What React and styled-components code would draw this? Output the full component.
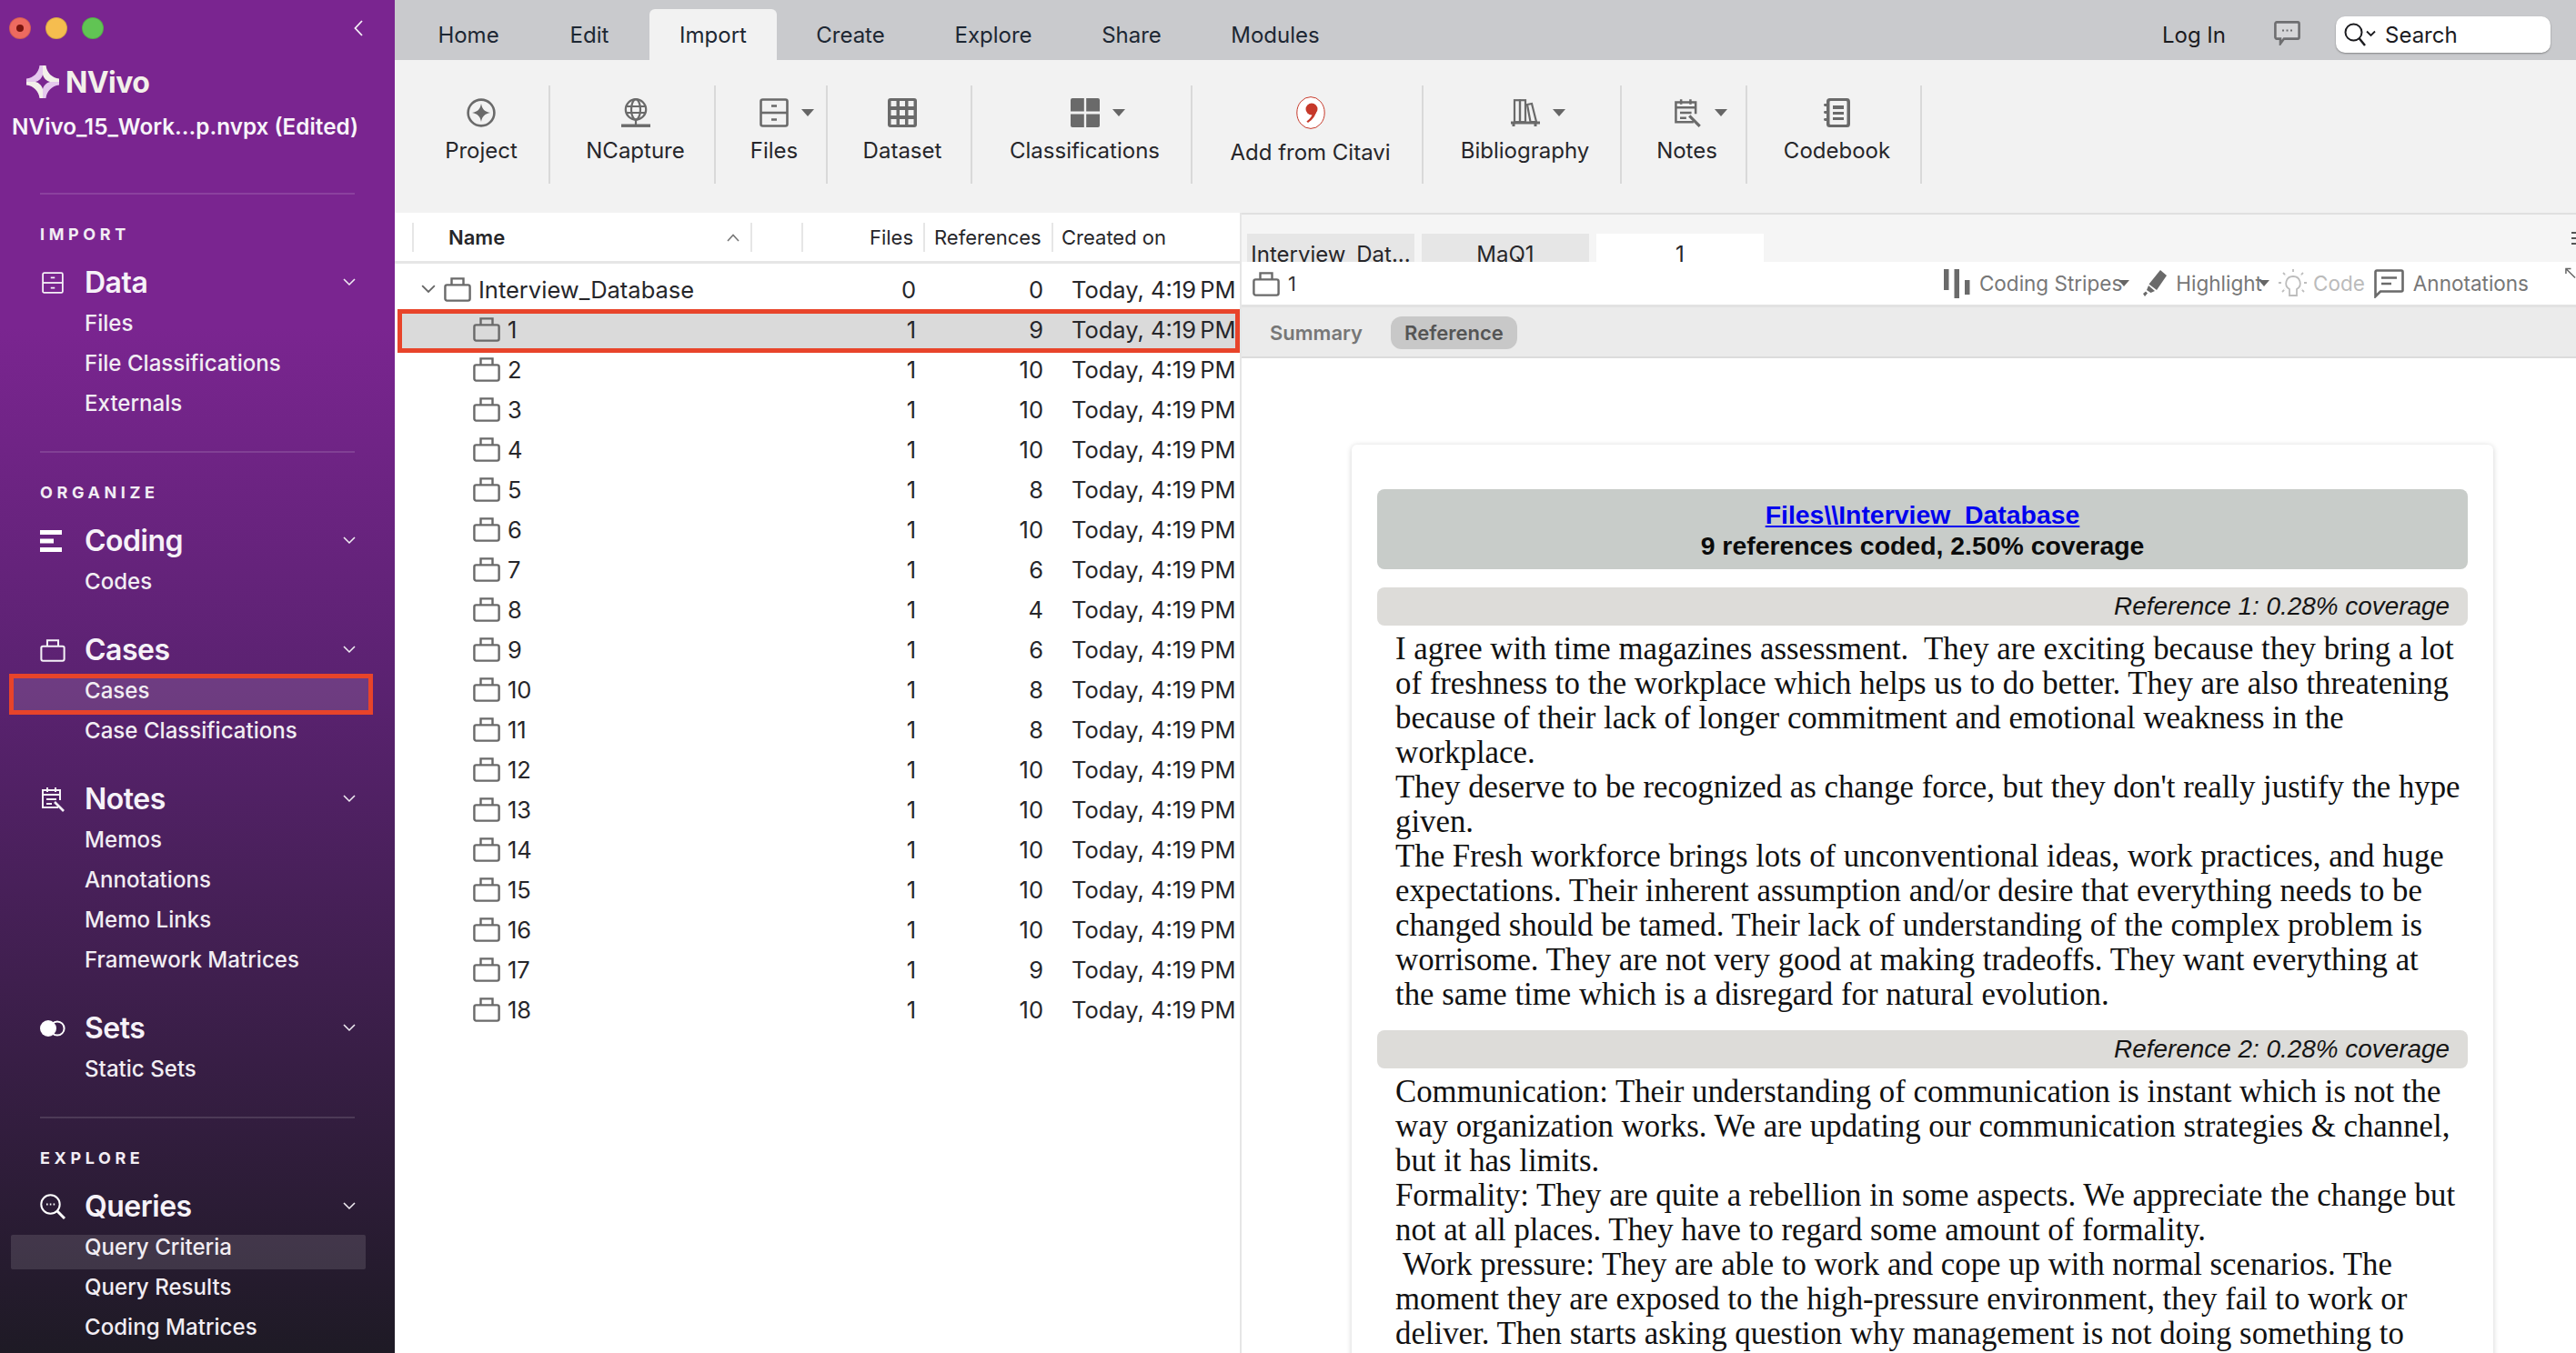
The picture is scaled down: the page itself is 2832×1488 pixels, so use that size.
import React from "react";
import styled, { createGlobalStyle } from "styled-components";

const GlobalStyle = createGlobalStyle`
  html, body { margin: 0; padding: 0; background: #fff; }
  body { font-family: Inter, "Noto Sans", sans-serif; }
  *, *::before, *::after { box-sizing: border-box; }
`;

const Page = styled.div`
  width: 2832px;
  height: 1488px;
  display: flex;
  overflow: hidden;
`;

/* ---------- sidebar ---------- */
const Sidebar = styled.aside`
  width: 434px;
  flex: none;
  height: 100%;
  display: flex;
  flex-direction: column;
  color: #f5f1f7;
  background: linear-gradient(180deg, #7a2590 0, #7a2590 360px, #5a2270 760px, #3f1f4e 1080px, #1e1a25 1488px);
  overflow: hidden;
`;
const WindowBar = styled.div`
  height: 64px;
  flex: none;
  display: flex;
  align-items: center;
  gap: 16px;
  padding: 0 0 2px 10px;
`;
const Light = styled.span`
  width: 24px;
  height: 24px;
  border-radius: 50%;
  background: ${(p) => p.$color};
  border: 1px solid rgba(0, 0, 0, 0.12);
  display: flex;
  align-items: center;
  justify-content: center;
  &::after {
    content: "";
    display: ${(p) => (p.$dot ? "block" : "none")};
    width: 8px;
    height: 8px;
    border-radius: 50%;
    background: #7a150d;
  }
`;
const CollapseBtn = styled.span`
  margin-left: auto;
  margin-right: 35px;
  display: flex;
`;
const LogoRow = styled.div`
  height: 52px;
  flex: none;
  display: flex;
  align-items: center;
  gap: 7px;
  padding-left: 29px;
  font-size: 32px;
  font-weight: 700;
  letter-spacing: -0.6px;
  color: #f3f0ea;
`;
const ProjectTitle = styled.div`
  height: 46px;
  flex: none;
  display: flex;
  align-items: center;
  padding-left: 13px;
  font-size: 24.3px;
  font-weight: 600;
  white-space: nowrap;
  color: #f8f4fa;
`;
const Divider = styled.div`
  height: 2px;
  flex: none;
  margin: ${(p) => p.$top}px 44px 0 44px;
  background: rgba(255, 255, 255, 0.13);
`;
const SectionLabel = styled.div`
  height: 24px;
  flex: none;
  margin-top: 33px;
  padding: 0 0 3px 44px;
  display: flex;
  align-items: center;
  font-size: 18px;
  font-weight: 700;
  letter-spacing: 4.6px;
  color: #f2edf4;
`;
const GroupHead = styled.div`
  height: 44px;
  flex: none;
  margin-top: ${(p) => p.$top}px;
  padding: 0 43px 3px 44px;
  display: flex;
  align-items: center;
  font-size: 32px;
  font-weight: 600;
  letter-spacing: -0.5px;
  color: #f6f2f8;
`;
const GroupIcon = styled.span`
  width: 49px;
  flex: none;
  display: flex;
  align-items: center;
`;
const GroupChevron = styled.span`
  margin-left: auto;
  display: flex;
`;
const SubItem = styled.div`
  height: 44px;
  flex: none;
  position: relative;
  padding: 0 0 1px 93px;
  display: flex;
  align-items: center;
  font-size: 24.1px;
  font-weight: 500;
  color: #f1edf3;
  ${(p) =>
    p.$marked &&
    `&::before {
      content: "";
      position: absolute;
      left: 10px;
      width: 400px;
      top: 3px;
      height: 45px;
      border: 5px solid #e8442a;
      background: rgba(255, 255, 255, 0.12);
    }`}
  ${(p) =>
    p.$hover &&
    `&::before {
      content: "";
      position: absolute;
      left: 12px;
      width: 390px;
      top: 8px;
      height: 38px;
      border-radius: 2px;
      background: rgba(255, 255, 255, 0.12);
    }`}
`;
const SubText = styled.span`
  position: relative;
`;

/* ---------- main column ---------- */
const Main = styled.div`
  flex: 1;
  min-width: 0;
  display: flex;
  flex-direction: column;
`;
const TabBar = styled.div`
  height: 66px;
  flex: none;
  background: #c9cacd;
  display: flex;
  align-items: flex-end;
  padding-left: 14px;
  color: #1d2733;
  font-size: 24px;
`;
const Tab = styled.div`
  height: 56px;
  width: ${(p) => p.$w}px;
  flex: none;
  display: flex;
  align-items: center;
  justify-content: center;
  padding-top: 1px;
  border-radius: 6px 6px 0 0;
  background: ${(p) => (p.$active ? "#f2f2f2" : "transparent")};
`;
const TabRight = styled.div`
  margin-left: auto;
  height: 66px;
  display: flex;
  align-items: center;
  padding-right: 28px;
`;
const LogIn = styled.span`
  color: #1b1b1f;
  margin-top: 10px;
`;
const ChatBtn = styled.span`
  display: flex;
  margin: 6px 39px 0 53px;
`;
const SearchBox = styled.div`
  width: 236px;
  height: 40px;
  margin-top: 10px;
  border-radius: 10px;
  background: #fff;
  box-shadow: 0 1px 2px rgba(0, 0, 0, 0.35);
  display: flex;
  align-items: center;
  gap: 9px;
  padding-left: 9px;
  color: #1b1b1f;
`;

const Ribbon = styled.div`
  height: 168px;
  flex: none;
  background: #f2f2f2;
  display: flex;
  align-items: flex-start;
  padding-top: 28px;
`;
const RibbonItem = styled.div`
  width: ${(p) => p.$w}px;
  height: 108px;
  flex: none;
  padding-left: ${(p) => p.$pad ?? 7}px;
  border-right: 2px solid #d9d9d9;
  display: flex;
  flex-direction: column;
  align-items: center;
  color: #26262a;
  font-size: 24px;
`;
const RibbonIcon = styled.div`
  position: relative;
  height: 38px;
  margin-top: 11px;
  display: flex;
  align-items: center;
`;
const RibbonLabel = styled.div`
  margin-top: 8px;
  line-height: 30px;
  white-space: nowrap;
  ${(p) => p.$low && "margin-top: 10px;"}
`;
const Caret = styled.span`
  width: 0;
  height: 0;
  margin-left: ${(p) => p.$nudge || 0}px;
  border-left: ${(p) => p.$s || 7}px solid transparent;
  border-right: ${(p) => p.$s || 7}px solid transparent;
  border-top: ${(p) => (p.$s || 7) + 1}px solid #666;
`;
const RibbonCaret = styled(Caret)`
  position: absolute;
  left: calc(100% + 14px);
  top: 15px;
`;

const Content = styled.div`
  flex: 1;
  min-height: 0;
  display: flex;
`;

/* ---------- list pane ---------- */
const ListPane = styled.div`
  width: 929px;
  flex: none;
  background: #fff;
  color: #26262a;
  font-size: 25.5px;
`;
const ListHead = styled.div`
  height: 56px;
  display: grid;
  grid-template-columns: 19px 372px 56px 134px 141px 1fr;
  align-items: end;
  padding-bottom: 10px;
  border-bottom: 3px solid #e6e6e6;
  font-size: 22px;
`;
const HeadCell = styled.div`
  height: 32px;
  display: flex;
  align-items: center;
  white-space: nowrap;
  border-left: ${(p) => (p.$plain ? "none" : "2px solid #e6e6e6")};
  padding-left: ${(p) => p.$pad || 0}px;
  justify-content: ${(p) => (p.$end ? "flex-end" : "flex-start")};
  padding-right: ${(p) => (p.$end ? 11 : 0)}px;
  font-weight: ${(p) => (p.$bold ? 600 : 400)};
`;
const SortCaret = styled.span`
  margin-left: auto;
  margin-right: 12px;
  display: flex;
`;
const Rows = styled.div`
  padding-top: 6px;
`;
const Row = styled.div`
  height: 44px;
  position: relative;
  display: grid;
  grid-template-columns: 516px 57px 140px 1fr;
  align-items: center;
  ${(p) =>
    p.$selected &&
    `&::before {
      content: "";
      position: absolute;
      left: 3px;
      right: 0;
      top: 0;
      height: 48px;
      border: 5px solid #e8442a;
      background: #dadada;
    }`}
`;
const NameCell = styled.div`
  position: relative;
  display: flex;
  align-items: center;
  gap: 8px;
  padding-left: ${(p) => (p.$root ? 29 : 86)}px;
  white-space: nowrap;
`;
const TreeToggle = styled.span`
  display: flex;
  width: 17px;
`;
const NumCell = styled.div`
  position: relative;
  text-align: right;
`;
const DateCell = styled.div`
  position: relative;
  padding-left: 31px;
  white-space: nowrap;
`;
const TimeSuffix = styled.span`
  margin-left: -3px;
`;

/* ---------- detail pane ---------- */
const DetailPane = styled.div`
  flex: 1;
  min-width: 0;
  display: flex;
  flex-direction: column;
  border-left: 2px solid #e6e6e6;
  background: #fff;
`;
const DocTabs = styled.div`
  height: 54px;
  flex: none;
  position: relative;
  background: #f5f5f5;
  border-top: 2px solid #e0e0e0;
  display: flex;
  align-items: flex-end;
  gap: 8px;
  padding-left: 6px;
  overflow: hidden;
`;
const DocTab = styled.div`
  width: 184px;
  height: 31px;
  flex: none;
  background: ${(p) => (p.$active ? "#fff" : "#e6e6e6")};
  color: #26262a;
  font-size: 24px;
  line-height: 30px;
  padding-top: 8px;
  text-align: center;
  white-space: nowrap;
`;
const PaneMenu = styled.span`
  position: absolute;
  right: 0;
  top: 19px;
  width: 5px;
  height: 14px;
  border-top: 2px solid #555;
  border-bottom: 2px solid #555;
  &::after {
    content: "";
    display: block;
    margin-top: 4px;
    height: 2px;
    background: #555;
  }
`;
const DocToolbar = styled.div`
  height: 47px;
  flex: none;
  display: flex;
  align-items: center;
  padding-left: 12px;
  color: #777;
  font-size: 22.5px;
`;
const DocName = styled.span`
  display: flex;
  align-items: center;
  gap: 9px;
  color: #333;
  font-size: 22px;
`;
const ToolGroup = styled.div`
  margin-left: auto;
  display: flex;
  align-items: center;
`;
const Tool = styled.span`
  display: flex;
  align-items: center;
  white-space: nowrap;
  gap: ${(p) => p.$gap ?? 10}px;
  margin-left: ${(p) => p.$left || 0}px;
  color: ${(p) => p.$color || "#777"};
`;
const ExpandBtn = styled.span`
  display: flex;
  margin-left: 40px;
  width: 12px;
  margin-top: -22px;
`;
const ViewBar = styled.div`
  height: 59px;
  flex: none;
  background: #ebebeb;
  border-top: 3px solid #e2e2e2;
  border-bottom: 2px solid #dcdcdc;
  display: flex;
  align-items: center;
  gap: 16px;
  padding: 2px 0 0 31px;
  font-size: 22px;
  font-weight: 600;
  color: #777;
`;
const ViewPill = styled.span`
  height: 36px;
  display: flex;
  align-items: center;
  padding: 0 15px;
  border-radius: 12px;
  background: ${(p) => (p.$active ? "#c8c8c8" : "transparent")};
  color: ${(p) => (p.$active ? "#555" : "#777")};
  margin-left: ${(p) => (p.$active ? 0 : -15)}px;
`;
const DocArea = styled.div`
  flex: 1;
  min-height: 0;
  overflow: hidden;
  padding: 95px 0 0 121px;
`;
const Card = styled.div`
  width: 1255px;
  min-height: 1100px;
  padding: 49px 28px 0;
  border-radius: 6px;
  background: #fff;
  box-shadow: 0 1px 6px rgba(0, 0, 0, 0.18);
`;
const CardHead = styled.div`
  height: 88px;
  padding-top: 11px;
  border-radius: 8px;
  background: #c8ccc9;
  text-align: center;
  font-family: "Liberation Sans", Arial, sans-serif;
  font-weight: 700;
  font-size: 28.4px;
  line-height: 34px;
  color: #0b0b0b;
`;
const SourceLink = styled.a`
  display: block;
  color: #0000ee;
  text-decoration: underline;
`;
const RefBar = styled.div`
  height: 42px;
  margin-top: ${(p) => p.$top}px;
  padding-right: 20px;
  border-radius: 8px;
  background: #dddcd9;
  display: flex;
  align-items: center;
  justify-content: flex-end;
  font-family: "Liberation Sans", Arial, sans-serif;
  font-style: italic;
  font-size: 27.9px;
  color: #151515;
`;
const RefBody = styled.div`
  padding: 7px 0 0 20px;
  font-family: "Liberation Serif", "Times New Roman", serif;
  font-size: 34.8px;
  line-height: 38px;
  color: #111;
`;
const RefLine = styled.div`
  white-space: pre;
  height: 38px;
`;

/* ---------- drawings ---------- */
const GREY = "#6a6a6a";

const Logo = () => (
  <svg width="36" height="36" viewBox="0 0 36 36">
    <g>
      <path d="M18 0 H21.5 C22.5 8 28 13.5 36 14.5 V18 H26 C22 17 19 14 18 10 Z" fill="#f3f0ea" />
      <path d="M18 0 H14.5 C13.5 8 8 13.5 0 14.5 V18 H10 C14 17 17 14 18 10 Z" fill="#e5c8ee" />
    </g>
    <g transform="rotate(180 18 18)">
      <path d="M18 0 H21.5 C22.5 8 28 13.5 36 14.5 V18 H26 C22 17 19 14 18 10 Z" fill="#f3f0ea" />
      <path d="M18 0 H14.5 C13.5 8 8 13.5 0 14.5 V18 H10 C14 17 17 14 18 10 Z" fill="#e5c8ee" />
    </g>
  </svg>
);

const Chevron = ({ size = 14, color = "#f1edf3" }) => (
  <svg width={size} height={size * 0.6} viewBox="0 0 14 8.4" fill="none">
    <path d="M1 1 L7 7 L13 1" stroke={color} strokeWidth="1.6" />
  </svg>
);

const Briefcase = ({ w = 30, h = 28, color = GREY, sw = 2.4 }) => (
  <svg width={w} height={h} viewBox="0 0 30 28" fill="none">
    <rect x="1.4" y="9.4" width="27.2" height="17.2" rx="2" stroke={color} strokeWidth={sw} />
    <path d="M8.5 9 V2.4 H21.5 V9" stroke={color} strokeWidth={sw} />
  </svg>
);

const CabinetIcon = ({ w, h, color, sw }) => (
  <svg width={w} height={h} viewBox="0 0 32 32" fill="none">
    <rect x="1.5" y="1.5" width="29" height="29" rx="2" stroke={color} strokeWidth={sw} />
    <path d="M1.5 16 H30.5" stroke={color} strokeWidth={sw} />
    <path d="M13 8.5 H19 M13 23.5 H19" stroke={color} strokeWidth={sw} />
  </svg>
);

const CodingIcon = () => (
  <svg width="24" height="24" viewBox="0 0 24 24" fill="#fff">
    <rect y="0" width="24" height="5" />
    <rect y="9.5" width="15" height="5" />
    <rect y="19" width="24" height="5" />
  </svg>
);

const NotesIcon = ({ w = 28, h = 28, color = "#f5f1f7", sw = 2 }) => (
  <svg width={w} height={h} viewBox="0 0 28 28" fill="none">
    <path d="M20 23 H3 V4 H22 V15" stroke={color} strokeWidth={sw} />
    <path d="M8 1 V6 M17 1 V6" stroke={color} strokeWidth={sw} />
    <path d="M3 9 H22 M7 14 H18 M7 19 H13" stroke={color} strokeWidth={sw} />
    <path d="M16 17 L26 27" stroke={color} strokeWidth={sw + 0.6} />
  </svg>
);

const SetsIcon = () => (
  <svg width="28" height="18" viewBox="0 0 28 18" fill="none">
    <circle cx="19" cy="9" r="7.6" stroke="#fff" strokeWidth="2" />
    <circle cx="9" cy="9" r="9" fill="#fff" />
  </svg>
);

const QueriesIcon = () => (
  <svg width="28" height="28" viewBox="0 0 28 28" fill="none">
    <circle cx="11.5" cy="11.5" r="10.2" stroke="#fff" strokeWidth="2" />
    <path d="M19 19 L27 27" stroke="#fff" strokeWidth="3" />
    <path d="M7 11.5 H8.6 M10.8 11.5 H12.4 M14.6 11.5 H16.2" stroke="#fff" strokeWidth="2" />
  </svg>
);

const ProjectIcon = () => (
  <svg width="32" height="32" viewBox="0 0 32 32" fill="none">
    <circle cx="16" cy="16" r="14.4" stroke={GREY} strokeWidth="2.6" />
    <path d="M16 6 C17 12 20 15 26 16 C20 17 17 20 16 26 C15 20 12 17 6 16 C12 15 15 12 16 6 Z" fill={GREY} />
  </svg>
);

const GlobeIcon = () => (
  <svg width="32" height="32" viewBox="0 0 32 32" fill="none" stroke={GREY} strokeWidth="2.2">
    <circle cx="16" cy="12.4" r="11.2" />
    <ellipse cx="16" cy="12.4" rx="5" ry="11.2" />
    <path d="M5 9 H27 M5 16 H27" />
    <path d="M16 24 V29" />
    <path d="M0 30.2 H32" strokeWidth="3.4" />
  </svg>
);

const DatasetIcon = () => (
  <svg width="32" height="32" viewBox="0 0 32 32">
    <rect width="32" height="32" rx="3" fill={GREY} />
    {[3, 13, 23].map((y) =>
      [3.5, 13, 22.5].map((x) => (
        <rect key={`${x}-${y}`} x={x} y={y} width="6" height="6" fill="#f2f2f2" />
      ))
    )}
  </svg>
);

const ClassificationsIcon = () => (
  <svg width="32" height="32" viewBox="0 0 32 32" fill={GREY}>
    <path d="M2 0 H14.8 V14.6 H0 V2 A2 2 0 0 1 2 0 Z" />
    <path d="M17.2 0 H30 A2 2 0 0 1 32 2 V14.6 H17.2 Z" />
    <path d="M0 17.4 H14.8 V32 H2 A2 2 0 0 1 0 30 Z" />
    <path d="M17.2 17.4 H32 V30 A2 2 0 0 1 30 32 H17.2 Z" />
  </svg>
);

const CitaviIcon = () => (
  <svg width="32" height="36" viewBox="0 0 32 36">
    <ellipse cx="16" cy="18" rx="15.2" ry="17.4" fill="#fff" stroke="#c6392a" strokeWidth="1" />
    <circle cx="17" cy="14" r="6.5" fill="#c6392a" />
    <path d="M18 8 C25 9 24 22 13 29 L11.4 27.6 C16 24 18 21 17.6 18 Z" fill="#c6392a" />
  </svg>
);

const BooksIcon = () => (
  <svg width="32" height="30" viewBox="0 0 32 30" fill="none" stroke={GREY} strokeWidth="2.2">
    <rect x="4" y="1.2" width="6" height="24" />
    <rect x="10" y="1.2" width="6" height="24" />
    <path d="M18 6 L23 5 L28 25 H21.5 Z" />
    <path d="M0 26 H32" strokeWidth="3" />
    <path d="M3 26 V30 M27 26 V30" strokeWidth="3" />
  </svg>
);

const CodebookIcon = () => (
  <svg width="29" height="32" viewBox="0 0 29 32">
    <rect x="3" y="0" width="26" height="32" rx="3.5" fill={GREY} />
    <rect x="6.5" y="3" width="19" height="26" rx="1" fill="#f2f2f2" />
    <rect x="10" y="8" width="12" height="4" fill={GREY} />
    <rect x="10" y="15" width="12" height="3" fill={GREY} />
    <rect x="10" y="21" width="12" height="3" fill={GREY} />
    <rect x="0" y="6" width="6" height="3" rx="1.4" fill={GREY} />
    <rect x="0" y="14" width="6" height="3" rx="1.4" fill={GREY} />
    <rect x="0" y="22" width="6" height="3" rx="1.4" fill={GREY} />
  </svg>
);

const ChatIcon = () => (
  <svg width="29" height="27" viewBox="0 0 29 27" fill="none">
    <path d="M3 1.4 H26 A1.6 1.6 0 0 1 27.6 3 V18 A1.6 1.6 0 0 1 26 19.6 H11 L7 25 V19.6 H3 A1.6 1.6 0 0 1 1.4 18 V3 A1.6 1.6 0 0 1 3 1.4 Z" stroke="#6e6e70" strokeWidth="2.6" fill="#d6d6d8" />
    <path d="M9 10.5 H11 M13.5 10.5 H15.5 M18 10.5 H20" stroke="#6e6e70" strokeWidth="2" />
  </svg>
);

const SearchIcon = () => (
  <svg width="36" height="26" viewBox="0 0 36 26" fill="none" stroke="#1b1b1f">
    <circle cx="10.5" cy="10.5" r="9" strokeWidth="2" />
    <path d="M16.5 17 L23 25" strokeWidth="2.4" />
    <path d="M25 9.5 L29.5 14 L34 9.5" strokeWidth="1.8" />
  </svg>
);

const StripesIcon = () => (
  <svg width="29" height="32" viewBox="0 0 29 32" fill={GREY}>
    <rect x="0" y="0" width="5.5" height="23" />
    <rect x="11.5" y="0" width="5.5" height="32" />
    <rect x="23" y="12" width="5.5" height="16" />
  </svg>
);

const HighlightIcon = () => (
  <svg width="29" height="29" viewBox="0 0 29 29" fill={GREY}>
    <path d="M22 0 L29 6 L18 22 L9.5 15.5 Z" />
    <path d="M9 17 L16 23 L11.5 25 L7 22 Z" />
    <path d="M3 26 L6 23.5 L8 25.5 L5 29 Z" />
  </svg>
);

const BulbIcon = () => (
  <svg width="32" height="32" viewBox="0 0 32 32" fill="none" stroke="#bdbdbd" strokeWidth="1.8">
    <path d="M16 8 A7.5 7.5 0 0 1 20 22 V29 H12 V22 A7.5 7.5 0 0 1 16 8 Z" />
    <path d="M16 0 V4 M5 4 L8 7 M27 4 L24 7 M0 15 H4 M28 15 H32 M4 25 L7 22 M28 25 L25 22" strokeDasharray="3 1" />
  </svg>
);

const AnnotationIcon = () => (
  <svg width="33" height="32" viewBox="0 0 33 32" fill="none" stroke={GREY} strokeWidth="2.6">
    <path d="M1.5 30 V3 A1.5 1.5 0 0 1 3 1.5 H30 A1.5 1.5 0 0 1 31.5 3 V23 A1.5 1.5 0 0 1 30 24.5 H7 Z" />
    <path d="M8 9.5 H25 M8 16 H19" />
  </svg>
);

const ExpandIcon = () => (
  <svg width="13" height="13" viewBox="0 0 13 13" fill="none" stroke="#666" strokeWidth="1.6">
    <path d="M1 7 V1 H7 M1 1 L12 12" />
  </svg>
);

/* ---------- data ---------- */
const NAV = [
  { section: "IMPORT", head: "Data", icon: <CabinetIcon w={28} h={24} color="#f5f1f7" sw={2.4} />, items: ["Files", "File Classifications", "Externals"] },
  { section: "ORGANIZE", head: "Coding", icon: <CodingIcon />, items: ["Codes"] },
  { head: "Cases", icon: <Briefcase w={28} h={26} color="#f5f1f7" sw={2.2} />, items: ["Cases", "Case Classifications"] },
  { head: "Notes", icon: <NotesIcon />, items: ["Memos", "Annotations", "Memo Links", "Framework Matrices"] },
  { head: "Sets", icon: <SetsIcon />, items: ["Static Sets"] },
  { section: "EXPLORE", head: "Queries", icon: <QueriesIcon />, items: ["Query Criteria", "Query Results", "Coding Matrices"] },
];

const TABS = [
  ["Home", 134], ["Edit", 132], ["Import", 140], ["Create", 162], ["Explore", 152], ["Share", 152], ["Modules", 164],
];

const RIBBON = [
  { label: "Project", w: 171, pad: 21, icon: <ProjectIcon /> },
  { label: "NCapture", w: 182, icon: <GlobeIcon /> },
  { label: "Files", w: 123, icon: <CabinetIcon w={32} h={32} color={GREY} sw={2.6} />, caret: true },
  { label: "Dataset", w: 159, icon: <DatasetIcon /> },
  { label: "Classifications", w: 242, icon: <ClassificationsIcon />, caret: true },
  { label: "Add from Citavi", w: 254, icon: <CitaviIcon />, low: true },
  { label: "Bibliography", w: 218, icon: <BooksIcon />, caret: true },
  { label: "Notes", w: 138, icon: <NotesIcon w={32} h={32} color={GREY} sw={2.2} />, caret: true },
  { label: "Codebook", w: 192, icon: <CodebookIcon /> },
];

const REFS = [9, 10, 10, 10, 8, 10, 6, 4, 6, 8, 8, 10, 10, 10, 10, 10, 9, 10];

const REF_ONE = [
  "I agree with time magazines assessment.  They are exciting because they bring a lot",
  "of freshness to the workplace which helps us to do better. They are also threatening",
  "because of their lack of longer commitment and emotional weakness in the",
  "workplace.",
  "They deserve to be recognized as change force, but they don't really justify the hype",
  "given.",
  "The Fresh workforce brings lots of unconventional ideas, work practices, and huge",
  "expectations. Their inherent assumption and/or desire that everything needs to be",
  "changed should be tamed. Their lack of understanding of the complex problem is",
  "worrisome. They are not very good at making tradeoffs. They want everything at",
  "the same time which is a disregard for natural evolution.",
];

const REF_TWO = [
  "Communication: Their understanding of communication is instant which is not the",
  "way organization works. We are updating our communication strategies & channel,",
  "but it has limits.",
  "Formality: They are quite a rebellion in some aspects. We appreciate the change but",
  "not at all places. They have to regard some amount of formality.",
  " Work pressure: They are able to work and cope up with normal scenarios. The",
  "moment they are exposed to the high-pressure environment, they fail to work or",
  "deliver. Then starts asking question why management is not doing something to",
];

const RowDate = () => (
  <DateCell>
    Today, 4:19 <TimeSuffix>PM</TimeSuffix>
  </DateCell>
);

export default function App() {
  return (
    <Page>
      <GlobalStyle />
      <Sidebar>
        <WindowBar>
          <Light $color="#ee6a5f" $dot />
          <Light $color="#f5bd4f" />
          <Light $color="#61c454" />
          <CollapseBtn>
            <svg width="10" height="18" viewBox="0 0 10 18" fill="none">
              <path d="M9 1 L1.5 9 L9 17" stroke="#f5f1f7" strokeWidth="1.8" />
            </svg>
          </CollapseBtn>
        </WindowBar>
        <LogoRow>
          <Logo />
          NVivo
        </LogoRow>
        <ProjectTitle>NVivo_15_Work...p.nvpx (Edited)</ProjectTitle>
        <Divider $top={50} />
        {NAV.map((group, i) => (
          <React.Fragment key={group.head}>
            {group.section && i > 0 && <Divider $top={30} />}
            {group.section && <SectionLabel>{group.section}</SectionLabel>}
            <GroupHead $top={group.section ? 19 : 32}>
              <GroupIcon>{group.icon}</GroupIcon>
              {group.head}
              <GroupChevron>
                <Chevron />
              </GroupChevron>
            </GroupHead>
            {group.items.map((item, j) => (
              <SubItem
                key={item}
                $marked={group.head === "Cases" && j === 0}
                $hover={item === "Query Criteria"}
              >
                <SubText>{item}</SubText>
              </SubItem>
            ))}
          </React.Fragment>
        ))}
      </Sidebar>

      <Main>
        <TabBar>
          {TABS.map(([name, w]) => (
            <Tab key={name} $w={w} $active={name === "Import"}>
              {name}
            </Tab>
          ))}
          <TabRight>
            <LogIn>Log In</LogIn>
            <ChatBtn>
              <ChatIcon />
            </ChatBtn>
            <SearchBox>
              <SearchIcon />
              Search
            </SearchBox>
          </TabRight>
        </TabBar>

        <Ribbon>
          {RIBBON.map((item) => (
            <RibbonItem key={item.label} $w={item.w} $pad={item.pad}>
              <RibbonIcon>
                {item.icon}
                {item.caret && <RibbonCaret />}
              </RibbonIcon>
              <RibbonLabel $low={item.low}>{item.label}</RibbonLabel>
            </RibbonItem>
          ))}
        </Ribbon>

        <Content>
          <ListPane>
            <ListHead>
              <HeadCell $plain />
              <HeadCell $pad={38} $bold>
                Name
                <SortCaret>
                  <svg width="14" height="9" viewBox="0 0 14 9" fill="none">
                    <path d="M1 8 L7 1.5 L13 8" stroke="#777" strokeWidth="1.6" />
                  </svg>
                </SortCaret>
              </HeadCell>
              <HeadCell />
              <HeadCell $end>Files</HeadCell>
              <HeadCell $pad={10}>References</HeadCell>
              <HeadCell $pad={9}>Created on</HeadCell>
            </ListHead>
            <Rows>
              <Row>
                <NameCell $root>
                  <TreeToggle>
                    <Chevron size={16} color="#666" />
                  </TreeToggle>
                  <Briefcase />
                  Interview_Database
                </NameCell>
                <NumCell>0</NumCell>
                <NumCell>0</NumCell>
                <RowDate />
              </Row>
              {REFS.map((refs, i) => (
                <Row key={i} $selected={i === 0}>
                  <NameCell>
                    <Briefcase />
                    {i + 1}
                  </NameCell>
                  <NumCell>1</NumCell>
                  <NumCell>{refs}</NumCell>
                  <RowDate />
                </Row>
              ))}
            </Rows>
          </ListPane>

          <DetailPane>
            <DocTabs>
              <DocTab>Interview_Dat...</DocTab>
              <DocTab>MaQ1</DocTab>
              <DocTab $active>1</DocTab>
              <PaneMenu />
            </DocTabs>
            <DocToolbar>
              <DocName>
                <Briefcase />1
              </DocName>
              <ToolGroup>
                <Tool>
                  <StripesIcon />
                  Coding Stripes
                </Tool>
                <Caret $s={6} $nudge={-4} />
                <Tool $left={12}>
                  <HighlightIcon />
                  Highlight
                </Tool>
                <Caret $s={6} $nudge={-4} />
                <Tool $left={10} $gap={6} $color="#bbb">
                  <BulbIcon />
                  Code
                </Tool>
                <Tool $left={10}>
                  <AnnotationIcon />
                  Annotations
                </Tool>
                <ExpandBtn>
                  <ExpandIcon />
                </ExpandBtn>
              </ToolGroup>
            </DocToolbar>
            <ViewBar>
              <ViewPill>Summary</ViewPill>
              <ViewPill $active>Reference</ViewPill>
            </ViewBar>
            <DocArea>
              <Card>
                <CardHead>
                  <SourceLink>Files\\Interview_Database</SourceLink>
                  9 references coded, 2.50% coverage
                </CardHead>
                <RefBar $top={20}>Reference 1: 0.28% coverage</RefBar>
                <RefBody>
                  {REF_ONE.map((line) => (
                    <RefLine key={line}>{line}</RefLine>
                  ))}
                </RefBody>
                <RefBar $top={20}>Reference 2: 0.28% coverage</RefBar>
                <RefBody>
                  {REF_TWO.map((line) => (
                    <RefLine key={line}>{line}</RefLine>
                  ))}
                </RefBody>
              </Card>
            </DocArea>
          </DetailPane>
        </Content>
      </Main>
    </Page>
  );
}
